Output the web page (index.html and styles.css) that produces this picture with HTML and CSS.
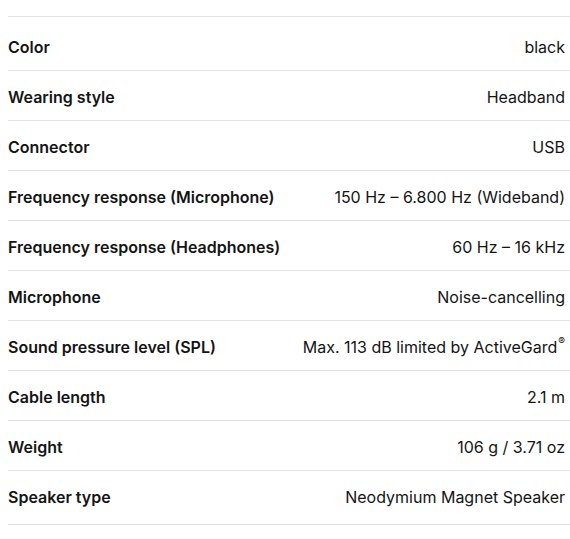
FILE: index.html
```html
<!DOCTYPE html>
<html lang="en">
<head>
<meta charset="utf-8">
<link rel="stylesheet" href="styles.css">
</head>
<body>
<div class="specs">
  <div class="row first"><span class="label">Color</span><span class="value">black</span></div>
  <div class="row"><span class="label">Wearing style</span><span class="value">Headband</span></div>
  <div class="row"><span class="label">Connector</span><span class="value">USB</span></div>
  <div class="row"><span class="label">Frequency response (Microphone)</span><span class="value">150 Hz – 6.800 Hz (Wideband)</span></div>
  <div class="row"><span class="label">Frequency response (Headphones)</span><span class="value">60 Hz – 16 kHz</span></div>
  <div class="row"><span class="label">Microphone</span><span class="value">Noise-cancelling</span></div>
  <div class="row"><span class="label">Sound pressure level (SPL)</span><span class="value">Max. 113 dB limited by ActiveGard<sup class="reg">®</sup></span></div>
  <div class="row"><span class="label">Cable length</span><span class="value">2.1 m</span></div>
  <div class="row"><span class="label">Weight</span><span class="value">106 g / 3.71 oz</span></div>
  <div class="row last"><span class="label">Speaker type</span><span class="value">Neodymium Magnet Speaker</span></div>
</div>
</body>
</html>
```
FILE: styles.css
```css
html, body {
  margin: 0;
  padding: 0;
  background: #ffffff;
}
body {
  padding: 16px 0 0 8px;
  font-family: Inter, Roboto, "Liberation Sans", sans-serif;
  font-size: 16px;
  color: #141414;
}
.specs {
  border-top: 1px solid #e3e3e3;
}
.row {
  display: flex;
  justify-content: space-between;
  align-items: center;
  height: 45px;
  border-bottom: 1px solid #e3e3e3;
  padding: 3px 5px 1px 0;
  box-sizing: content-box;
}
.row.first {
  padding-top: 7px;
}
.row.last {
  padding-bottom: 5px;
}
.label {
  font-weight: 600;
}
.value {
  font-weight: 400;
}
.reg {
  font-size: 10px;
  vertical-align: top;
  position: relative;
  top: -1px;
  margin-left: 1px;
  line-height: 1;
}
```
